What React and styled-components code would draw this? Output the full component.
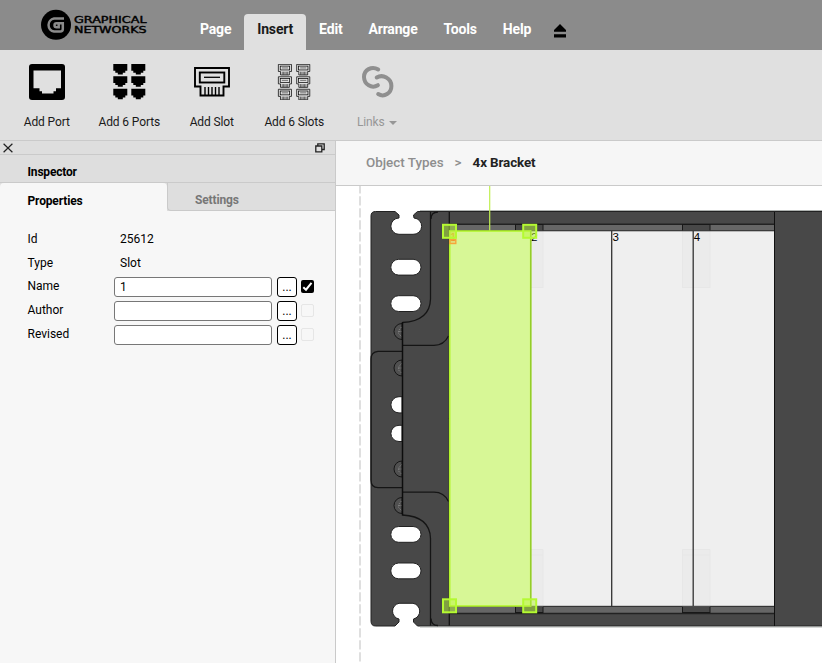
import React,{useState} from 'react'
import styled, { createGlobalStyle } from 'styled-components'

const menus = ["Page","Insert","Edit","Arrange","Tools","Help"];

const slotPaths = (
    <g fill="none" stroke="#000">
        <path d="M1 2H35V20.500H29.500V29.500H6.500V20.500H1Z" strokeWidth="1.900" />
        <rect x="5.800" y="6.500" width="24.500" height="10" strokeWidth="1.900" />
        <path d="M10 11.300H26" strokeWidth="1.300" />
        <path d="M11 21V29M14.500 21V29M18 21V29M21.500 21V29M25 21V29" strokeWidth="1.400" />
    </g>
)

const portShape = "M0 0H14V6.700H12V8.700H9.500V10.500H4.500V8.700H2V6.700H0Z"

function Logo() {
    return (
        <LogoSvg width="110" height="34" viewBox="38 8 110 34">
            <circle cx="56" cy="24.800" r="15" fill="#000" />
            <path d="M64 18.600H54A6.600 6.600 0 0 0 54 31.600H60.300Q62.800 31.600 62.800 29.100V23.300H56.500A2 2 0 0 0 56.500 27.300H58.700V24" fill="none" stroke="#8b8b8b" strokeWidth="2.500" />
            <g fontFamily="DejaVu Sans, sans-serif" fontSize="8" stroke="#000" strokeWidth=".35">
                <text x="74" y="23.400" textLength="72.500" lengthAdjust="spacingAndGlyphs">GRAPHICAL</text>
                <text x="74" y="32.800" textLength="72.500" lengthAdjust="spacingAndGlyphs">NETWORKS</text>
            </g>
        </LogoSvg>
    )
}

function PortIcon() {
    return (
        <svg width="36" height="36" viewBox="0 0 36 36">
            <rect width="36" height="36" rx="3" />
            <path d="M4.500 6.500H32V24.300H27V27.300H24.500V29.500H13V27.300H10.500V24.300H4.500Z" fill="#e0e0e0" />
        </svg>
    )
}

function SixPortsIcon() {
    return (
        <svg width="36" height="36" viewBox="0 0 36 36">
            {[0,12.3,24.7].map((y)=>[2.3,20.3].map((x)=>(
                <path key={x + "-" + y} d={portShape} transform={`translate(${x} ${y})`} />
            )))}
        </svg>
    )
}

function SlotIcon() {
    return <svg width="36" height="36" viewBox="0 -2 36 36">{slotPaths}</svg>
}

function SixSlotsIcon() {
    return (
        <svg width="36" height="36" viewBox="0 0 36 36">
            {[-0.4,12,24.5].map((y)=>[2,20.3].map((x)=>(
                <g key={x + "-" + y} transform={`translate(${x} ${y}) scale(.385)`}>{slotPaths}</g>
            )))}
        </svg>
    )
}

function LinksIcon() {
    return (
        <svg width="36" height="36" viewBox="-.7 -.5 36 36" fill="none" stroke="#8f8f8f" strokeWidth="4" strokeLinecap="round">
            <path d="M18.500 5C12 1 4.200 5.500 4.300 12.500C4.500 20 12 24.500 18.200 20.700" />
            <path d="M17 13C23 9.500 31.700 13.500 31.700 21.500C31.700 28.500 24.500 33.300 18.500 29.500" />
        </svg>
    )
}

const tools = [
    {name:"Add Port",icon:<PortIcon />},
    {name:"Add 6 Ports",icon:<SixPortsIcon />},
    {name:"Add Slot",icon:<SlotIcon />},
    {name:"Add 6 Slots",icon:<SixSlotsIcon />},
    {name:"Links",icon:<LinksIcon />,disabled:true},
]

function Inspector() {
    const [name,setName] = useState("1");
    const [author,setAuthor] = useState("");
    const [revised,setRevised] = useState("");
    const fields = [
        {label:"Name",value:name,onChange:setName,checked:true},
        {label:"Author",value:author,onChange:setAuthor},
        {label:"Revised",value:revised,onChange:setRevised},
    ]
    return (
        <Panel>
            <PanelBar>
                <svg width="10" height="10" viewBox="0 0 10 10" fill="none" stroke="#222" strokeWidth="1.200">
                    <path d="M.6 .8L9.400 9.200M9.400 .8L.6 9.200" />
                </svg>
                <svg width="10" height="10" viewBox="0 0 10 10" fill="none" stroke="#222" strokeWidth="1.300">
                    <path d="M2.800 2.800V.8H9.200V6.500H7M.8 3H6.800V8.800H.8Z" />
                </svg>
            </PanelBar>
            <PanelTitle>Inspector</PanelTitle>
            <PanelTabs>
                <PanelTab $active>Properties</PanelTab>
                <PanelTab>Settings</PanelTab>
            </PanelTabs>
            <Fields>
                <Row><Label>Id</Label><Value>25612</Value></Row>
                <Row><Label>Type</Label><Value>Slot</Value></Row>
                {
                    fields.map((field)=>(
                        <Row key={field.label}>
                            <Label $raised>{field.label}</Label>
                            <Input value={field.value} onChange={(e)=>field.onChange(e.target.value)} />
                            <More>...</More>
                            <Check $checked={field.checked}>
                                {field.checked && (
                                    <svg width="13" height="13" viewBox="0 0 13 13" fill="none" stroke="#fff" strokeWidth="2">
                                        <path d="M2.300 7.200L5 9.700L10.500 2.800" />
                                    </svg>
                                )}
                            </Check>
                        </Row>
                    ))
                }
            </Fields>
        </Panel>
    )
}

function Screw({ y }) {
    return (
        <g>
            <path d={`M402 ${y - 8}A8 8 0 0 0 402 ${y + 8}Z`} fill="#505050" stroke="#161616" />
            <path d={`M401.500 ${y - 4.500}L398.500 ${y - 1}V${y + 2}L401.500 ${y + 5}M399 ${y}H402`} fill="none" stroke="#858585" strokeWidth=".8" strokeDasharray="1.500 1" />
        </g>
    )
}

// upper half of the ear outline, mirrored for the lower half
function EarLines() {
    return (
        <g fill="none" stroke="#151515" strokeWidth="1.300">
            <path d="M430.500 212V299Q430 321 402.500 322.500" />
            <path d="M431 219Q431 212 438 212" />
            <path d="M402.500 345.300H434Q444 345.300 448.500 336" />
            <path d="M449.300 212V419" />
        </g>
    )
}

function Handle({ x, y }) {
    return <rect x={x} y={y} width="13" height="13" fill="#b9f73b" fillOpacity=".5" stroke="#b5fa32" strokeWidth="2" />
}

function Bracket() {
    return (
        <Drawing viewBox="336 186 486 477">
            <path d="M360 184.300V663" stroke="#dfdfdf" strokeWidth="2" strokeDasharray="9.300 2.700" />
            {/* body */}
            <path d="M371 216Q371 211.500 375.500 211.500H395L399 215V218A8 8 0 0 0 399 234.300H413A8 8 0 0 0 414 218L413.500 215L417.500 211.500H823V626H417.500L413.500 622V619A8 8 0 0 0 413 603.300H399A8 8 0 0 0 399 619V622L395 626H375.500Q371 626 371 621Z" fill="#484848" stroke="#222" />
            <path d="M420 210.500H822M420 627H822" stroke="#9a9f9d" strokeWidth=".8" />
            <g fill="#fff" stroke="#222">
                {[259.3,295.7,526.5,563].map((y)=>(
                    <rect key={y} x="390.800" y={y} width="30.200" height="15.800" rx="7.900" />
                ))}
            </g>
            {/* ear */}
            <path d="M402.500 351.300H378Q371 352 371 359V480Q371 487.700 378 487.700H402.500" fill="none" stroke="#151515" strokeWidth="1.300" />
            <path d="M402 396.700H399A8.100 8.100 0 0 0 399 412.900H402ZM402 425.300H399A8.100 8.100 0 0 0 399 441.500H402Z" fill="#fff" stroke="#222" />
            <Screw y={331.5} />
            <Screw y={368} />
            <Screw y={469} />
            <Screw y={505.5} />
            <EarLines />
            <g transform="matrix(1 0 0 -1 0 837.500)"><EarLines /></g>
            <path d="M402.500 322V515.500" stroke="#0d0d0d" strokeWidth="1.500" />
            {/* rails */}
            <g fill="#666" stroke="#222">
                <rect x="449.500" y="224.500" width="325" height="6.500" />
                <rect x="449.500" y="606.500" width="325" height="7" />
            </g>
            <path d="M449.500 224.300H774.500M449.500 613.500H774.500" stroke="#222" strokeWidth="1.500" />
            <g fill="#484848" stroke="#181818">
                {[515.5,682.5].map((x)=>(
                    <React.Fragment key={x}>
                        <rect x={x} y="224.500" width="27.500" height="8" />
                        <rect x={x} y="604" width="27.500" height="8.500" />
                    </React.Fragment>
                ))}
            </g>
            <path d="M774.500 212V626" stroke="#111" />
            {/* slots */}
            <rect x="449.500" y="231" width="324.500" height="375" fill="#efefef" />
            <g fill="#ebebeb" stroke="#e7e7e7">
                {[515.5,682.5].map((x)=>(
                    <React.Fragment key={x}>
                        <rect x={x} y="231.500" width="27.500" height="56" />
                        <path d={`M${x} 549.500h27.500V606h-27.500ZM${x} 555h27.500`} />
                    </React.Fragment>
                ))}
            </g>
            <path d="M449 230.800H774M449 606.300H774" stroke="#3a3a3a" />
            <path d="M530.500 231V606M611.700 231V607M693.200 231V606" stroke="#333" strokeWidth="1.300" />
            <g fontFamily="Liberation Sans, sans-serif" fontSize="11.500">
                <text x="531" y="241">2</text>
                <text x="612.500" y="241">3</text>
                <text x="693.700" y="241">4</text>
            </g>
            {/* selection */}
            <path d="M489.700 186V230.500" stroke="#c0ef52" strokeWidth="1.200" />
            <rect x="449.700" y="231" width="81" height="375" fill="#d7f796" stroke="#b3f52c" strokeWidth="1.600" />
            <path d="M530.700 231V606" stroke="#83b62b" strokeWidth=".8" />
            <text x="450" y="241" fontFamily="Liberation Sans, sans-serif" fontSize="11.500" fill="#f08a24">1</text>
            <rect x="449.800" y="231.500" width="5.500" height="12" fill="#f7a53a" fillOpacity=".3" />
            <rect x="449.800" y="239.500" width="6" height="4" fill="none" stroke="#f7a53a" strokeWidth="1.400" />
            <Handle x={443} y={224.8} />
            <Handle x={523.2} y={224.8} />
            <Handle x={443} y={599.3} />
            <Handle x={523.2} y={599.3} />
        </Drawing>
    )
}

export default function App() {
    const [current,setCurrent] = useState("Insert");
    return (
        <Container>
            <GlobalStyle />
            <Header>
                <Logo />
                <Menu>
                    {
                        menus.map((menu)=>(
                            <MenuTab key={menu} $active={menu === current} onClick={()=>setCurrent(menu)}>{menu}</MenuTab>
                        ))
                    }
                </Menu>
                <Eject width="12" height="14" viewBox="0 0 12 14">
                    <path d="M0 7.700V6L6 0L12 6V7.700ZM0 10.200H12V13.500H0Z" />
                </Eject>
            </Header>
            <Ribbon>
                {
                    tools.map((tool)=>(
                        <Tool key={tool.name} $disabled={tool.disabled}>
                            {tool.icon}
                            <ToolName>{tool.name}{tool.disabled && <Caret />}</ToolName>
                        </Tool>
                    ))
                }
            </Ribbon>
            <Main>
                <Inspector />
                <Editor>
                    <Breadcrumb>
                        <span>Object Types</span>
                        <span>&gt;</span>
                        <b>4x Bracket</b>
                    </Breadcrumb>
                    <Bracket />
                </Editor>
            </Main>
        </Container>
    )
}

const GlobalStyle = createGlobalStyle`
    *{
        box-sizing: border-box;
    }
    body{
        margin: 0;
        overflow: hidden;
        font-family: Roboto, sans-serif;
    }
    svg{
        display: block;
        flex: none;
    }
`;

const Container = styled.div`
    display: flex;
    flex-direction: column;
    width: 822px;
    height: 663px;
    background-color: #fff;
    font-size: 12px;
    color: #111;
`;

const Header = styled.header`
    display: flex;
    height: 50px;
    flex: none;
    padding-left: 38px;
    background-color: #8b8b8b;
`;

const LogoSvg = styled.svg`
    margin-top: 8px;
`;

const Menu = styled.nav`
    display: flex;
    align-items: flex-end;
    width: 359px;
    margin-left: 39px;
`;

const MenuTab = styled.div`
    height: 36px;
    padding: 0 13px;
    line-height: 30px;
    font-size: 14px;
    font-weight: 700;
    letter-spacing: -0.18px;
    border-radius: 4px 4px 0 0;
    cursor: pointer;
    color: ${({ $active }) => $active ? "#1a1a1a" : "#fff"};
    background-color: ${({ $active }) => $active ? "#e0e0e0" : "transparent"};
`;

const Eject = styled.svg`
    margin: 24px 0 0 8px;
`;

const Ribbon = styled.div`
    display: flex;
    flex: none;
    height: 91px;
    padding: 14px 0 0 5.500px;
    background-color: #e0e0e0;
    border-bottom: 1px solid #cacaca;
`;

const Tool = styled.div`
    display: flex;
    flex-direction: column;
    align-items: center;
    width: 82.500px;
    color: ${({ $disabled }) => $disabled ? "#979797" : "#1a1a1a"};
`;

const ToolName = styled.div`
    display: flex;
    align-items: center;
    margin-top: 15px;
    line-height: 14px;
    letter-spacing: -0.12px;
    white-space: nowrap;
`;

const Caret = styled.span`
    margin-left: 4px;
    margin-top: 2px;
    border: 4px solid transparent;
    border-top-color: #979797;
    border-bottom: 0;
`;

const Main = styled.main`
    display: flex;
    flex: 1;
    min-height: 0;
`;

const Panel = styled.aside`
    width: 336px;
    flex: none;
    background-color: #f7f7f7;
    border-right: 1px solid #cacaca;
    color: #000;
`;

const PanelBar = styled.div`
    display: flex;
    justify-content: space-between;
    align-items: center;
    height: 14px;
    padding: 0 10px 0 3px;
    background-color: #dedede;
    border-bottom: 1px solid #cacaca;
`;

const PanelTitle = styled.div`
    height: 28px;
    padding: 10px 0 0 27.500px;
    line-height: 15px;
    font-weight: 700;
    letter-spacing: -0.18px;
    background-color: #dedede;
    border-bottom: 1px solid #cacaca;
`;

const PanelTabs = styled.div`
    display: flex;
    height: 28px;
    background-color: #dedede;
`;

const PanelTab = styled.div`
    width: ${({ $active }) => $active ? "167px" : "168px"};
    padding-left: ${({ $active }) => $active ? "27.5px" : "27px"};
    line-height: ${({ $active }) => $active ? "37px" : "35px"};
    font-weight: 700;
    letter-spacing: -0.15px;
    color: ${({ $active }) => $active ? "#000" : "#777"};
    background-color: ${({ $active }) => $active ? "#f7f7f7" : "#dedede"};
    border: 0 solid #cacaca;
    border-width: ${({ $active }) => $active ? "0" : "0 0 1px 1px"};
    border-radius: ${({ $active }) => $active ? "4px 4px 0 0" : "0 0 0 4px"};
`;

const Fields = styled.div`
    padding: 16px 0 0 27.500px;
`;

const Row = styled.div`
    display: flex;
    align-items: center;
    height: 24px;
`;

const Label = styled.label`
    width: 86.500px;
    padding-bottom: ${({ $raised }) => $raised ? "2px" : "0"};
`;

const Value = styled.span`
    padding-left: 6px;
`;

const Input = styled.input`
    width: 158px;
    height: 20px;
    padding: 0 5px 1px;
    border: 1px solid #777;
    border-radius: 3px;
    background-color: #fff;
    font: 12px Roboto, sans-serif;
    outline: none;
`;

const More = styled.div`
    width: 20px;
    height: 20px;
    margin: 0 4px 0 5px;
    border: 1px solid #000;
    border-radius: 3px;
    background-color: #fff;
    text-align: center;
    line-height: 18px;
`;

const Check = styled.div`
    width: 13px;
    height: 13px;
    margin-bottom: 1px;
    border-radius: 2px;
    background-color: ${({ $checked }) => $checked ? "#000" : "#f7f7f7"};
    border: ${({ $checked }) => $checked ? "0" : "1px solid #e6e6e6"};
`;

const Editor = styled.section`
    display: flex;
    flex-direction: column;
    flex: 1;
    min-width: 0;
`;

const Breadcrumb = styled.div`
    display: flex;
    flex: none;
    gap: 11px;
    height: 45px;
    padding-left: 30px;
    line-height: 43px;
    font-size: 13.400px;
    font-weight: 500;
    color: #8e8e8e;
    background-color: #f6f6f6;
    border-bottom: 1px solid #cacaca;
    b{
        color: #222;
        font-weight: 700;
        letter-spacing: -0.1px;
    }
`;

const Drawing = styled.svg`
    width: 486px;
    height: 477px;
`;
